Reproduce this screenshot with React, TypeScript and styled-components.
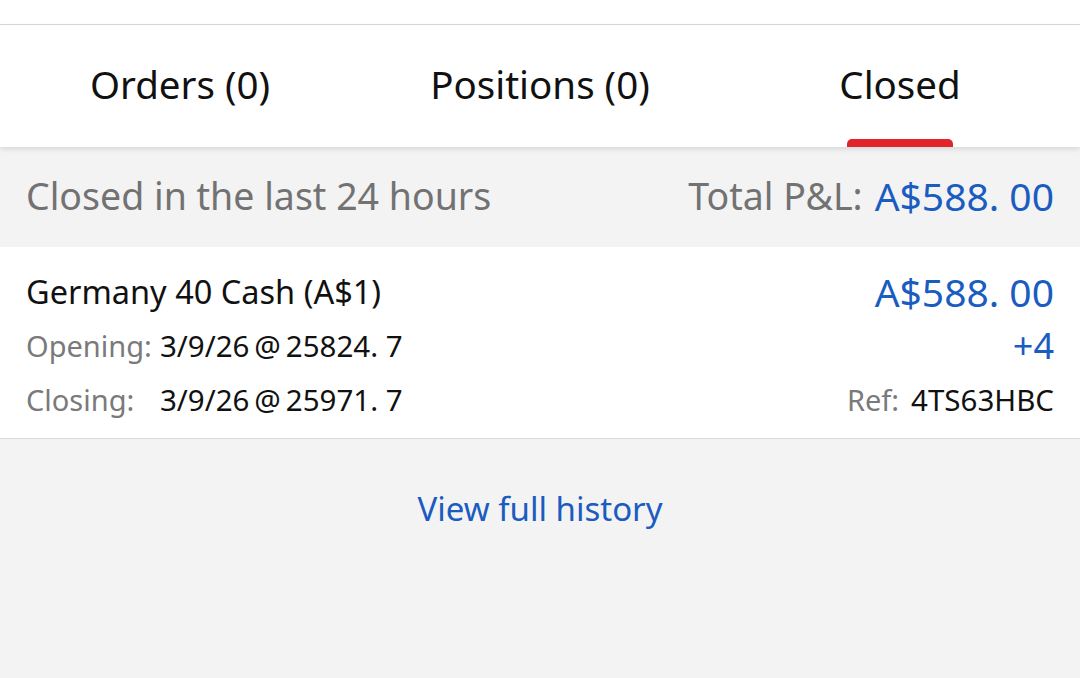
import React, { useState } from "react";
import styled, { createGlobalStyle } from "styled-components";

const GlobalStyle = createGlobalStyle`
  html, body {
    margin: 0;
    padding: 0;
    background: #f3f3f3;
    font-family: "Noto Sans", "Liberation Sans", sans-serif;
  }
`;

const tabs = ["Orders (0)", "Positions (0)", "Closed"];

function App() {
  const [active, setActive] = useState(2);

  return (
    <Page>
      <GlobalStyle />
      <TopStrip />
      <TabBar>
        {tabs.map((label, i) => (
          <Tab key={label} onClick={() => setActive(i)}>
            {label}
            {active === i && <Indicator />}
          </Tab>
        ))}
      </TabBar>

      <SummaryBar>
        <SummaryTitle>Closed in the last 24 hours</SummaryTitle>
        <Total>
          <Label>Total P&amp;L:</Label>
          <Amount>A$588. 00</Amount>
        </Total>
      </SummaryBar>

      <Card>
        <Row>
          <Instrument>Germany 40 Cash (A$1)</Instrument>
          <Amount>A$588. 00</Amount>
        </Row>
        <Row>
          <Detail>
            <DetailLabel>Opening:</DetailLabel>
            <DetailValue>3/9/26{"\u2009"}@{"\u2009"}25824. 7</DetailValue>
          </Detail>
          <Size>+4</Size>
        </Row>
        <Row>
          <Detail>
            <DetailLabel>Closing:</DetailLabel>
            <DetailValue>3/9/26{"\u2009"}@{"\u2009"}25971. 7</DetailValue>
          </Detail>
          <Detail>
            <RefLabel>Ref:</RefLabel>
            <DetailValue>4TS63HBC</DetailValue>
          </Detail>
        </Row>
      </Card>

      <HistoryLink>View full history</HistoryLink>
    </Page>
  );
}

const Page = styled.div`
  width: 1080px;
  height: 678px;
  background: #f3f3f3;
  overflow: hidden;
`;

const TopStrip = styled.div`
  height: 24px;
  background: #ffffff;
  border-bottom: 1px solid #d9d9d9;
`;

const TabBar = styled.div`
  display: grid;
  grid-template-columns: repeat(3, 1fr);
  height: 122px;
  background: #ffffff;
  box-shadow: 0 2px 5px rgba(0, 0, 0, 0.12);
  position: relative;
  z-index: 1;
`;

const Tab = styled.div`
  position: relative;
  display: flex;
  align-items: center;
  justify-content: center;
  padding-bottom: 4px;
  font-size: 38.5px;
  color: #111111;
  cursor: pointer;
`;

const Indicator = styled.span`
  position: absolute;
  bottom: 0;
  left: 50%;
  transform: translateX(-50%);
  width: 106px;
  height: 8px;
  border-radius: 5px 5px 0 0;
  background: #e0242a;
`;

const SummaryBar = styled.div`
  display: flex;
  align-items: center;
  justify-content: space-between;
  height: 100px;
  padding: 0 26px 3px;
  box-sizing: border-box;
  background: #f3f3f3;
`;

const SummaryTitle = styled.span`
  font-size: 37.5px;
  color: #727272;
`;

const Total = styled.div`
  display: flex;
  align-items: center;
  gap: 12px;
`;

const Label = styled.span`
  font-size: 37.5px;
  color: #727272;
`;

const Amount = styled.span`
  font-size: 39px;
  color: #1a5cc0;
`;

const Card = styled.div`
  display: flex;
  flex-direction: column;
  padding: 20px 26px 15px;
  gap: 6px;
  background: #ffffff;
  border-bottom: 1px solid #dcdcdc;
`;

const Row = styled.div`
  display: flex;
  align-items: center;
  justify-content: space-between;
  height: 48px;
`;

const Instrument = styled.span`
  font-size: 32.5px;
  color: #111111;
`;

const Detail = styled.div`
  display: flex;
  align-items: center;
`;

const DetailLabel = styled.span`
  width: 134px;
  font-size: 29px;
  color: #7a7a7a;
`;

const RefLabel = styled.span`
  margin-right: 12px;
  font-size: 29px;
  color: #7a7a7a;
`;

const DetailValue = styled.span`
  font-size: 29.5px;
  color: #111111;
`;

const Size = styled.span`
  font-size: 36px;
  color: #1a5cc0;
`;

const HistoryLink = styled.div`
  margin-top: 47px;
  text-align: center;
  font-size: 33px;
  color: #1a5cc0;
  cursor: pointer;
`;

export default App;
